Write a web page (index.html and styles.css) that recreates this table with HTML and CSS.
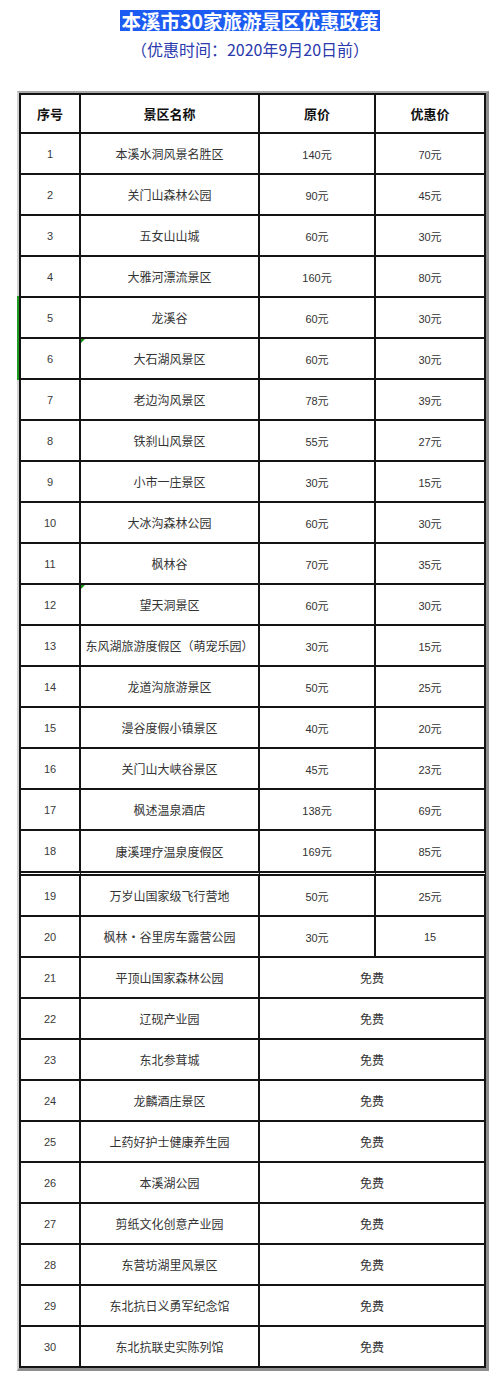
FILE: index.html
```html
<!DOCTYPE html>
<html lang="zh-CN">
<head>
<meta charset="utf-8">
<title>本溪市30家旅游景区优惠政策</title>
<link rel="stylesheet" href="styles.css">
</head>
<body>
<header class="head">
  <h1 class="title"><span class="mark">本溪市30家旅游景区优惠政策</span></h1>
  <p class="sub">（优惠时间：2020年9月20日前）</p>
</header>
<div class="wrap">
<div class="sheet">
<table class="grid">
  <thead>
    <tr><th class="c1">序号</th><th class="c2">景区名称</th><th class="c3">原价</th><th class="c4">优惠价</th></tr>
  </thead>
  <tbody>
    <tr><td class="n">1</td><td class="nm">本溪水洞风景名胜区</td><td class="p">140元</td><td class="p">70元</td></tr>
    <tr><td class="n">2</td><td class="nm">关门山森林公园</td><td class="p">90元</td><td class="p">45元</td></tr>
    <tr><td class="n">3</td><td class="nm">五女山山城</td><td class="p">60元</td><td class="p">30元</td></tr>
    <tr><td class="n">4</td><td class="nm">大雅河漂流景区</td><td class="p">160元</td><td class="p">80元</td></tr>
    <tr><td class="n flag-left">5</td><td class="nm">龙溪谷</td><td class="p">60元</td><td class="p">30元</td></tr>
    <tr><td class="n flag-left">6</td><td class="nm tri">大石湖风景区</td><td class="p">60元</td><td class="p">30元</td></tr>
    <tr><td class="n">7</td><td class="nm">老边沟风景区</td><td class="p">78元</td><td class="p">39元</td></tr>
    <tr><td class="n">8</td><td class="nm">铁刹山风景区</td><td class="p">55元</td><td class="p">27元</td></tr>
    <tr><td class="n">9</td><td class="nm">小市一庄景区</td><td class="p">30元</td><td class="p">15元</td></tr>
    <tr><td class="n">10</td><td class="nm">大冰沟森林公园</td><td class="p">60元</td><td class="p">30元</td></tr>
    <tr><td class="n">11</td><td class="nm">枫林谷</td><td class="p">70元</td><td class="p">35元</td></tr>
    <tr><td class="n">12</td><td class="nm tri">望天洞景区</td><td class="p">60元</td><td class="p">30元</td></tr>
    <tr><td class="n">13</td><td class="nm">东风湖旅游度假区（萌宠乐园）</td><td class="p">30元</td><td class="p">15元</td></tr>
    <tr><td class="n">14</td><td class="nm">龙道沟旅游景区</td><td class="p">50元</td><td class="p">25元</td></tr>
    <tr><td class="n">15</td><td class="nm">漫谷度假小镇景区</td><td class="p">40元</td><td class="p">20元</td></tr>
    <tr><td class="n">16</td><td class="nm">关门山大峡谷景区</td><td class="p">45元</td><td class="p">23元</td></tr>
    <tr><td class="n">17</td><td class="nm">枫述温泉酒店</td><td class="p">138元</td><td class="p">69元</td></tr>
    <tr class="split"><td class="n">18</td><td class="nm">康溪理疗温泉度假区</td><td class="p">169元</td><td class="p">85元</td></tr>
    <tr><td class="n">19</td><td class="nm">万岁山国家级飞行营地</td><td class="p">50元</td><td class="p">25元</td></tr>
    <tr><td class="n">20</td><td class="nm">枫林·谷里房车露营公园</td><td class="p">30元</td><td class="p">15</td></tr>
    <tr><td class="n">21</td><td class="nm">平顶山国家森林公园</td><td class="free" colspan="2">免费</td></tr>
    <tr><td class="n">22</td><td class="nm">辽砚产业园</td><td class="free" colspan="2">免费</td></tr>
    <tr><td class="n">23</td><td class="nm">东北参茸城</td><td class="free" colspan="2">免费</td></tr>
    <tr><td class="n">24</td><td class="nm">龙麟酒庄景区</td><td class="free" colspan="2">免费</td></tr>
    <tr><td class="n">25</td><td class="nm">上药好护士健康养生园</td><td class="free" colspan="2">免费</td></tr>
    <tr><td class="n">26</td><td class="nm">本溪湖公园</td><td class="free" colspan="2">免费</td></tr>
    <tr><td class="n">27</td><td class="nm">剪纸文化创意产业园</td><td class="free" colspan="2">免费</td></tr>
    <tr><td class="n">28</td><td class="nm">东营坊湖里风景区</td><td class="free" colspan="2">免费</td></tr>
    <tr><td class="n">29</td><td class="nm">东北抗日义勇军纪念馆</td><td class="free" colspan="2">免费</td></tr>
    <tr><td class="n">30</td><td class="nm">东北抗联史实陈列馆</td><td class="free" colspan="2">免费</td></tr>
  </tbody>
</table>
</div>
</div>
</body>
</html>
```
FILE: styles.css
```css
html, body {
  margin: 0;
  padding: 0;
  background: #ffffff;
}
body {
  width: 500px;
  font-family: "Noto Sans CJK SC", "Liberation Sans", sans-serif;
  color: #333;
}
.head {
  padding-top: 10px;
  text-align: center;
}
.title {
  margin: 0;
  font-size: 19.5px;
  line-height: 21px;
  font-weight: 700;
}
.mark {
  display: inline-block;
  background: #1d5cf2;
  color: #ffffff;
  padding: 0 1px;
  line-height: 21px;
  height: 21px;
}
.sub {
  margin: 9px 0 0;
  font-size: 16px;
  line-height: 18px;
  color: #2b3aad;
}
.wrap {
  padding: 33px 0 0 17px;
}
.sheet {
  width: max-content;
  border-top: 2px solid #a9a9a9;
  border-left: 2px solid #d2d2d2;
  border-right: 3px solid #8e8e8e;
  border-bottom: 3px solid #8e8e8e;
}
.grid {
  box-sizing: border-box;
  width: 467px;
  table-layout: fixed;
  border-collapse: separate;
  border-spacing: 0;
  border-top: 2px solid #141414;
  border-left: 2px solid #141414;
}
.grid th, .grid td {
  box-sizing: border-box;
  padding: 0;
  text-align: center;
  vertical-align: middle;
  border-right: 2px solid #141414;
  border-bottom: 2px solid #141414;
  white-space: nowrap;
}
.grid th {
  height: 39px;
  font-size: 13px;
  font-weight: 700;
  color: #111;
}
.c1 { width: 60px; }
.c2 { width: 179px; }
.c3 { width: 116px; }
.c4 { width: 110px; }
.grid td {
  height: 41px;
}
.n {
  font-family: "Liberation Sans", "Noto Sans CJK SC", sans-serif;
  font-size: 11px;
  color: #3a3a3a;
}
.nm {
  font-size: 12px;
  color: #333;
}
.p {
  font-family: "Liberation Sans", "Noto Sans CJK SC", sans-serif;
  font-size: 11px;
  color: #333;
}
.free {
  font-size: 12px;
  color: #333;
}
.grid tr.split td {
  height: 45px;
  border-bottom: 5px double #141414;
}
.flag-left {
  position: relative;
}
.flag-left::before {
  content: "";
  position: absolute;
  left: -4px;
  top: -2px;
  bottom: -2px;
  width: 2px;
  background: #1e9a1e;
}
.tri {
  position: relative;
}
.tri::before {
  content: "";
  position: absolute;
  left: 0;
  top: 0;
  border-top: 4px solid #1a8f1a;
  border-right: 4px solid transparent;
}
```
